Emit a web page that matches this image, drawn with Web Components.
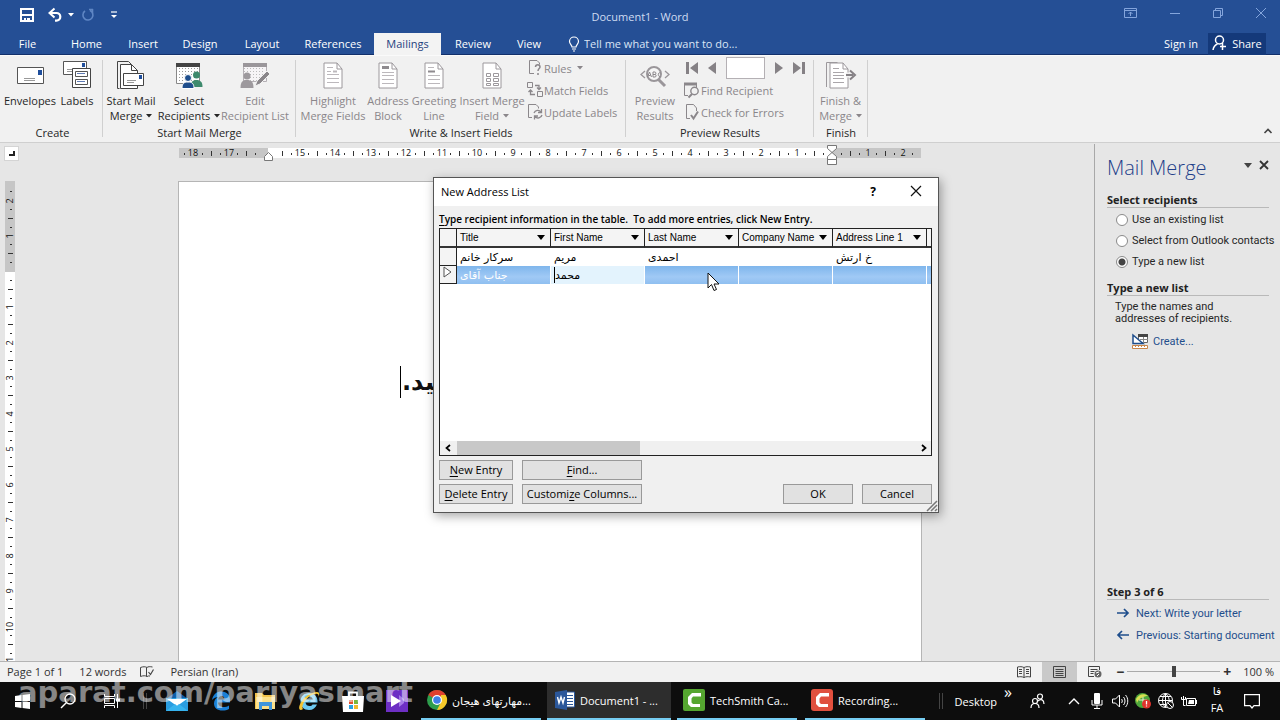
<!DOCTYPE html>
<html lang="en">
<head>
<meta charset="utf-8">
<title>Document1 - Word</title>
<style>
  html, body { margin: 0; height: 100%; }
  body { font: 11px/15px "Open Sans", "DejaVu Sans", sans-serif; color: #262626; background: #e6e6e6; overflow: hidden; }
</style>
</head>
<body>
<word-app></word-app>
<script>
const BASE = `*{box-sizing:border-box} button{font:inherit;color:inherit;background:none;border:0;padding:0;margin:0} a{color:inherit;text-decoration:none} input{font:inherit}`;

function define(name, css, html, setup) {
  const template = document.createElement('template');
  template.innerHTML = `<style>${BASE}${css}</style>${html}`;
  customElements.define(name, class extends HTMLElement {
    connectedCallback() {
      if (this.shadowRoot) return;
      this.attachShadow({ mode: 'open' }).append(template.content.cloneNode(true));
      if (setup) setup.call(this, this.shadowRoot);
    }
  });
}

/* ---------- icons: name -> [width, height, markup] ---------- */
const PAGE = (c) => `<path d="M1 1h13l5 6v19H1z" fill="#fff" stroke="${c}"/><path d="M14 1v6h5" fill="none" stroke="${c}"/>`;
const GRIDDOTS = (c) => { let s = ''; for (let y = 7; y < 20; y += 3) for (let x = 4; x < 24; x += 3) s += `<rect x="${x}" y="${y}" width="1" height="1" fill="${c}"/>`; return s; };
const ICONS = {
  save: [14, 14, `<path d="M1 1h12v12H1z" fill="none" stroke="#fff" stroke-width="2"/><path d="M2 7h10M5 10v3" stroke="#fff" stroke-width="2"/><path d="M7 10h3v3H7z" fill="#fff"/>`],
  undo: [14, 14, `<path d="M2 5h6.500a3.800 3.800 0 0 1 0 7.600H7" fill="none" stroke="#fff" stroke-width="2.200"/><path d="M6.500.500L1.500 5l5 4.500" fill="none" stroke="#fff" stroke-width="2"/>`],
  caret: [6, 4, `<path d="M0 0h6L3 3.500z" fill="currentColor"/>`],
  redo: [13, 14, `<path d="M4 3A5 5 0 1 0 9 2.500M11.500 1v4M8 1.500h4" fill="none" stroke="#5f86c4" stroke-width="1.600"/>`],
  qat: [8, 8, `<path d="M1 1h6" stroke="#fff" stroke-width="1.200"/><path d="M1 4h6L4 7z" fill="#fff"/>`],
  ribbonopt: [14, 12, `<g fill="none" stroke="#84a5dc"><path d="M.500 1.500h12v9H.500zM.500 3.500h12M6.500 9V5M4.500 7l2-2 2 2"/></g>`],
  min: [12, 12, `<path d="M1 6.500h10" stroke="#84a5dc"/>`],
  restore: [12, 12, `<path d="M1.500 3.500h7v7h-7zM3.500 3V1.500h7v7H9" fill="none" stroke="#84a5dc"/>`],
  close: [12, 12, `<path d="M1 1l10 10M11 1L1 11" stroke="#84a5dc"/>`],
  bulb: [12, 16, `<path d="M4 11c0-2-2.500-3-2.500-5.500a4.500 4.500 0 0 1 9 0C10.500 8 8 9 8 11z" fill="none" stroke="#fff" stroke-width="1.200"/><path d="M4 13h4M5 15h2" stroke="#fff"/>`],
  share: [16, 16, `<circle cx="7.500" cy="5" r="4" fill="none" stroke="#fff" stroke-width="1.500"/><path d="M1 15c.500-3 2-5 4.500-6M10.500 8v7M8 11.500h6" fill="none" stroke="#fff" stroke-width="1.500"/>`],
  envelope: [28, 28, `<path d="M1.500 6.500h26v16H1.500z" fill="#fff" stroke="#555"/><path d="M22 9h4v5h-4z" fill="#1f4e9c"/><path d="M8 17.500h11M8 19.500h11" stroke="#999"/>`],
  labels: [28, 28, `<path d="M.500.500h23v13H.500z" fill="#fff" stroke="#555"/><path d="M19 2h3v4h-3z" fill="#1f4e9c"/><path d="M4 8.500h7M4 10.500h5" stroke="#999"/><path d="M9.500 7.500h18v19h-18z" fill="#fff" stroke="#444"/><path d="M12.500 10.500h12v5h-12zM12.500 18.500h12v5h-12z" fill="#fff" stroke="#555"/><path d="M14 12.500h8M14 20.500h8" stroke="#5f7bb5"/>`],
  startmerge: [28, 28, `<path d="M2.500 27.500H.500V.500h11l3 3" fill="none" stroke="#444"/><path d="M3.500 3.500h11l6 6v18h-17z" fill="#fff" stroke="#444"/><path d="M14.500 3.500v6h6" fill="none" stroke="#444"/><path d="M6.500 12.500h20v12h-20z" fill="#fff" stroke="#444"/><path d="M22 14h3v4h-3z" fill="#1f4e9c"/><path d="M10 19.500h9M10 21.500h7" stroke="#999"/>`],
  recipients: [28, 28, `<path d="M1.500 2.500h23v20h-23z" fill="#fff" stroke="#888"/><path d="M1 2h24v4H1z" fill="#444"/>${GRIDDOTS('#999')}<circle cx="21.500" cy="14" r="3.500" fill="#3e8a6d"/><path d="M15.500 26c0-5 2-7 6-7s6 2 6 7z" fill="#3e8a6d"/><circle cx="13" cy="17" r="3.500" fill="#1f4e8c" stroke="#fff"/><path d="M7 27.500c0-5 2-6.500 6-6.500s6 1.500 6 6.500z" fill="#1f4e8c" stroke="#fff"/>`],
  editlist: [30, 28, `<path d="M3.500 2.500h23v18h-23z" fill="#f6f4f6" stroke="#b5b0b5"/><path d="M3 2h24v4H3z" fill="#9a969a"/>${GRIDDOTS('#bbb')}<circle cx="7" cy="15" r="3.500" fill="#9d999d"/><path d="M.500 27c0-6 2-8 6.500-8s6.500 2 6.500 8z" fill="#9d999d"/><path d="M15 25l2-5L27 10l3 3-10 10z" fill="#8a868a" stroke="#f1f1f1"/>`],
  highlight: [20, 27, `${PAGE('#9c989c')}<path d="M4 5.500h6M4 9.500h4M4 12.500h12M4 16.500h12M4 20.500h12" stroke="#bcb8bc"/><path d="M10 9.500h4" stroke="#bcb8bc" stroke-width="2"/>`],
  address: [20, 27, `${PAGE('#9c989c')}<path d="M4 5.500h7" stroke="#8f8b8f" stroke-width="3"/><path d="M4 10.500h12M4 13.500h12M4 17.500h12M4 21.500h12" stroke="#bcb8bc"/>`],
  greeting: [20, 27, `${PAGE('#9c989c')}<path d="M4 9.500h7" stroke="#8f8b8f" stroke-width="2"/><path d="M4 5.500h6M4 13.500h12M4 17.500h12M4 21.500h12" stroke="#bcb8bc"/>`],
  insertfield: [20, 27, `${PAGE('#9c989c')}<path d="M4.500 11.500h4v3h-4zM11.500 11.500h5v3h-5zM4.500 16.500h4v3h-4zM11.500 16.500h5v3h-5zM4.500 21.500h4v2h-4zM11.500 21.500h5v2h-5z" fill="none" stroke="#9c989c"/>`],
  rules: [16, 16, `<path d="M12.500 4.500V3l-2.500-2.500H2.500v13H7" fill="none" stroke="#8b878b"/><path d="M8.500 7c0-3 4.500-3 4.500 0 0 1.500-2 1.800-2 4M11 13v2" fill="none" stroke="#8b878b" stroke-width="1.500"/>`],
  match: [16, 16, `<g fill="none" stroke="#8b878b"><path d="M.500.500h5v5h-5zM10.500 9.500h5v5h-5z"/><path d="M8 3.500h4v4M10 5.500l2 2 2-2M8 12.500H3.500V8M1.500 10l2-2 2 2" stroke-width="1.300"/></g>`],
  update: [16, 16, `<path d="M11.500 4.500V3L9 .500H1.500v13H5" fill="none" stroke="#8b878b"/><path d="M7 9a4 4 0 0 1 7-1M14.500 5v3.500H11M15 11a4 4 0 0 1-7 1.500M7.500 15.500V12H11" fill="none" stroke="#8b878b" stroke-width="1.300"/>`],
  preview: [30, 28, `<circle cx="14" cy="13" r="7" fill="#f6f6f6" stroke="#9a969a" stroke-width="2"/><path d="M18 18l7 7" stroke="#9a969a" stroke-width="3"/><path d="M5 10l-4 3.500L5 17M25 10l4 3.500-4 3.500" fill="none" stroke="#9a969a" stroke-width="1.300"/><g fill="none" stroke="#8b878b"><path d="M7.500 16l2-5 2 5M8.500 14.500h2M13 11v5h2c1.500 0 1.500-2.500 0-2.500h-2 2c1.200 0 1.200-2.500 0-2.500zM20.500 12c-3-1.500-3 4.500 0 3.500"/></g>`],
  first: [12, 12, `<path d="M0 0h3v12H0zM12 0v12L4 6z" fill="#858185"/>`],
  prev: [8, 12, `<path d="M8 0v12L0 6z" fill="#858185"/>`],
  next: [8, 12, `<path d="M0 0v12l8-6z" fill="#858185"/>`],
  last: [12, 12, `<path d="M9 0h3v12H9zM0 0v12l8-6z" fill="#858185"/>`],
  findrec: [16, 16, `<path d="M.500 3v10.500H4M12.500 3v3" fill="none" stroke="#8b878b"/><path d="M0 2h13" stroke="#8b878b" stroke-width="3"/><circle cx="10.500" cy="9" r="3.700" fill="none" stroke="#8b878b" stroke-width="1.400"/><path d="M8 12l-3.500 3.500" stroke="#8b878b" stroke-width="2"/>`],
  check: [16, 16, `<path d="M12.500 7V4L9.500.500h-7v14H6" fill="none" stroke="#8b878b"/><path d="M7 11l2.500 3.500 4.500-7" fill="none" stroke="#8b878b" stroke-width="2"/>`],
  finish: [30, 28, `<path d="M.500 26V1.500h11" fill="none" stroke="#9c989c"/><g transform="translate(3 1)">${PAGE('#9c989c')}<path d="M4 6.500h6M4 10.500h11M4 13.500h11M4 16.500h11M4 20.500h11" stroke="#aaa6aa"/></g><path d="M20 14h9" stroke="#f1f1f1" stroke-width="5"/><path d="M20 14h7M24 9.500l5 4.500-5 4.500" fill="none" stroke="#858185" stroke-width="2"/>`],
  collapse: [10, 6, `<path d="M1.500 5L5 1.500 8.500 5" fill="none" stroke="#444" stroke-width="1.600"/>`],
  paneclose: [10, 10, `<path d="M1 1l8 8M9 1L1 9" stroke="#333" stroke-width="1.800"/>`],
  panecaret: [8, 5, `<path d="M0 0h8L4 5z" fill="#444"/>`],
  create: [16, 15, `<path d="M6.500.500h9v8h-9z" fill="#fff" stroke="#666"/><path d="M6 1.500h10" stroke="#444" stroke-width="3"/><path d="M8 5.500h8M11.500 3v6" stroke="#888"/><path d="M1 1l10 8.500H1z" fill="#fff" stroke="#1f4e8c" stroke-width="1.500"/><path d="M.500 11.500h15v3H.500z" fill="#fff" stroke="#c98548"/><path d="M3.500 12v1M6.500 12v1M9.500 12v1M12.500 12v1" stroke="#c98548"/>`],
  arrowr: [12, 10, `<path d="M0 5h11M7 1l4 4-4 4" fill="none" stroke="#1f4e8c" stroke-width="1.700"/>`],
  arrowl: [12, 10, `<path d="M12 5H1M5 1L1 5l4 4" fill="none" stroke="#1f4e8c" stroke-width="1.700"/>`],
  dlgclose: [12, 12, `<path d="M1 1l10 10M11 1L1 11" stroke="#111" stroke-width="1.200"/>`],
  drop: [8, 5, `<path d="M0 0h8L4 5z" fill="#000"/>`],
  rowmark: [9, 12, `<path d="M1 1v10l7-5z" fill="#fff" stroke="#555"/>`],
  sleft: [6, 8, `<path d="M5 1L1.500 4 5 7" fill="none" stroke="#000" stroke-width="1.700"/>`],
  sright: [6, 8, `<path d="M1 1l3.500 3L1 7" fill="none" stroke="#000" stroke-width="1.700"/>`],
  grip: [10, 10, `<path d="M10 0L0 10M10 4l-6 6M10 8l-2 2" stroke="#777" stroke-width="1.500"/>`],
  cursor: [13, 20, `<path d="M1 1v15l3.500-3.500L7 18.500l2.500-1L7 12h5z" fill="#fff" stroke="#111"/>`],
  proof: [14, 12, `<g fill="none" stroke="#444"><path d="M7 10.500c-1.500-1-4-1-6.500 0v-9c2.500-1 5-1 6.500 0 1-1 3-1 5.500-.500M6.500 1.500v9M7 10.500c1-.500 2-.800 3-.500"/><path d="M8.500 6l2 2.500 3-5" stroke-width="1.200"/></g>`],
  readmode: [14, 12, `<path d="M7 11.500c-2-1-4-1-6.500-.500v-10c2.500-.500 4.500-.500 6.500.500 2-1 4-1 6.500-.500v10c-2.500-.500-4.500-.500-6.500.500zM7 1.500v10M2 3.500h3M2 5.500h3M2 7.500h3M9 3.500h3M9 5.500h3M9 7.500h3" fill="none" stroke="#444"/>`],
  printlayout: [14, 12, `<path d="M.500.500h12v11H.500zM2.500 3.500h8M2.500 5.500h8M2.500 7.500h8M2.500 9.500h8" fill="none" stroke="#444"/>`],
  weblayout: [14, 12, `<path d="M6 10.500H.500V.500h11V4M2.500 3.500h7M2.500 5.500h4M2.500 7.500h3" fill="none" stroke="#444"/><circle cx="10" cy="8" r="3.500" fill="#666"/><path d="M8 7l3-1M9 10l2-2" stroke="#fff"/>`],
  windows: [15, 15, `<path d="M0 2l6.500-1v6H0zM7.500.900L15 0v7H7.500zM0 8h6.500v6L0 13zM7.500 8H15v7l-7.500-1z" fill="#fff"/>`],
  search: [16, 16, `<circle cx="10" cy="6" r="5" fill="none" stroke="#fff" stroke-width="1.300"/><path d="M6.500 9.500L1 15" stroke="#fff" stroke-width="1.500"/>`],
  taskview: [17, 16, `<path d="M.500 1v2.500h10V1M.500 15v-2.500h10V15M.500 5.500h10v5H.500zM13.500 1v14" fill="none" stroke="#fff"/><path d="M12 5.500h4v3h-4z" fill="#fff"/>`],
  mail: [24, 21, `<path d="M1 8L12 0l11 8z" fill="#0f5ea8"/><path d="M1 7h22v13H1z" fill="#2a9de0"/><path d="M2 8h20l-10 7z" fill="#fff"/><path d="M1 20l9-7 2 2 2-2 9 7z" fill="#36b3ee"/>`],
  edge: [20, 20, `<path d="M1 9C2 3 6 .500 10.500.500c5.500 0 8.500 4 8.500 8.500v2.500H7c.300 3.500 3 4.500 5.500 4.500 2 0 4-.500 5.500-1.500v3.500c-2 1-4 1.500-6.500 1.500C6.500 19.500 3 17 3 12.500 3 9 5 7 7.500 6 5 6 2.500 7 1 9zM7.200 8.500h6.300C13.500 6.500 12.500 5 10.500 5S7.500 6.500 7.200 8.500z" fill="#1b7fd6"/>`],
  folder: [21, 18, `<path d="M0 1h7l2 2h11v14H0z" fill="#f0c24b"/><path d="M1 5h19v12H1z" fill="#fbe08a"/><path d="M4 18v-8h13v8h-3v-4H7v4z" fill="#3f95dc"/>`],
  ie: [22, 20, `<path d="M11 2c5.500 0 9 4 8.500 9.500H7.500c.300 2.500 2 3.500 4 3.500 1.500 0 2.500-.500 3-1.500H19C17.500 17 15 19 11 19c-5 0-8.500-3.500-8.500-8.500S6 2 11 2zM7.500 8.500h7.300C14.500 6.500 13 5.500 11 5.500S8 6.500 7.500 8.500z" fill="#6cc9f2"/><path d="M2.500 19C-2 17 6 2 19 1c3 0 2.500 3 1.500 4.500C21.500 2 17 2 12 5 6 9 3 16 5 18c-1 .800-1.800 1-2.500 1z" fill="#f3c433"/>`],
  store: [22, 22, `<path d="M7 7V2.500h8V7" fill="none" stroke="#fff" stroke-width="1.800"/><path d="M0 6h22l-1 16H1z" fill="#fff"/><path d="M7 10h4v4H7z" fill="#e2502f"/><path d="M12 10h4v4h-4z" fill="#7cb63a"/><path d="M7 15h4v4H7z" fill="#2b9fdf"/><path d="M12 15h4v4h-4z" fill="#f2b92c"/>`],
  video: [22, 22, `<path d="M0 0h22v22H0z" fill="#6d2fc4"/><path d="M13 5v12l5-4V9z" fill="#a57be6"/><path d="M5 5v12l10-6z" fill="#fff"/>`],
  chrome: [20, 20, `<circle cx="10" cy="10" r="10" fill="#2d9d4c"/><path d="M10 10L1.300 5A10 10 0 0 1 18.700 5z" fill="#e0402f"/><path d="M18.700 5A10 10 0 0 1 10 20l4-8V5z" fill="#f6c829"/><circle cx="10" cy="10" r="5" fill="#fff"/><circle cx="10" cy="10" r="3.800" fill="#3f7fe8"/>`],
  word: [20, 20, `<path d="M10 2h9.500v15H10z" fill="#fff" stroke="#2b579a"/><path d="M12 5.500h6M12 8.500h6M12 11.500h6M12 14.500h6" stroke="#2b579a" stroke-width="1.200"/><path d="M0 2l12-2v20L0 18z" fill="#2b579a"/><path d="M2.500 7l1.500 6 2-6 2 6 1.500-6" fill="none" stroke="#fff" stroke-width="1.400"/>`],
  camgreen: [22, 22, `<rect width="22" height="22" rx="2" fill="#55a630"/><path d="M18 4H9L5 8v7l3 3h9v-3h-7l-1.500-1.500v-4L10 7.500h8z" fill="#fff"/>`],
  camred: [22, 22, `<rect width="22" height="22" rx="3" fill="#e0503f"/><path d="M18 4H9L5 8v7l3 3h9v-3h-7l-1.500-1.500v-4L10 7.500h8z" fill="#fff"/>`],
  people: [15, 16, `<g fill="none" stroke="#fff" stroke-width="1.200"><circle cx="5" cy="8" r="2.500"/><path d="M1 15c0-6 8-6 8 0"/><circle cx="10" cy="3.500" r="2.500"/><path d="M8 8c3-3 6-1 6 3"/></g>`],
  up: [12, 8, `<path d="M1 7l5-5 5 5" fill="none" stroke="#fff" stroke-width="1.400"/>`],
  mic: [12, 16, `<rect x="3" y="0" width="6" height="11" rx="1" fill="#fff"/><path d="M1 7v5h10V7M6 12v3M3 15.500h6" fill="none" stroke="#fff"/>`],
  speaker: [16, 14, `<path d="M.500 5h3l4-4v12l-4-4h-3z" fill="none" stroke="#fff"/><path d="M9.500 5c1 1 1 3 0 4M11.500 3c2 2 2 6 0 8M13.500 1c3 3 3 9 0 12" fill="none" stroke="#fff"/>`],
  idm: [16, 16, `<circle cx="7.500" cy="7.500" r="7.500" fill="#4ea63c"/><path d="M1 6C4 1 9 0 13 3 9 3 4 5 2 10z" fill="#d8df52"/><path d="M4 7h8M8 4v7" stroke="#e6f2d0"/><circle cx="11.500" cy="11" r="4.500" fill="#e0322c"/><path d="M11.500 8v3.500M11.500 12.500v1" stroke="#fff" stroke-width="1.300"/>`],
  globe: [16, 16, `<g fill="none" stroke="#fff"><circle cx="7.500" cy="7.500" r="7"/><path d="M.500 7.500h14M7.500.500v14M2 3.500h11M2 11.500h6M7.500.500c-4 4-4 10 0 14M7.500.500c3 3 4 5 3.500 8"/></g><circle cx="12" cy="12" r="3.500" fill="#0e0e0e" stroke="#fff"/><path d="M10 10l4 4" stroke="#fff"/>`],
  battery: [16, 12, `<path d="M5.500 3.500h9v7h-9zM15.500 5v4M2.500 1v3M.500 2v2.500h4V2M2.500 5v5.500h2" fill="none" stroke="#fff"/><path d="M8 5h5v4H7z" fill="#fff"/>`],
  notify: [16, 15, `<path d="M.600.600h14.800v11H10L8 14l-2-2.400H.600z" fill="none" stroke="#fff" stroke-width="1.200"/>`]
};
define('ui-icon', `:host{display:inline-flex;flex:none} svg{display:block;overflow:visible}`, ``, function (root) {
  const [w, h, body] = ICONS[this.getAttribute('name')];
  root.innerHTML += `<svg width="${w}" height="${h}" viewBox="0 0 ${w} ${h}" aria-hidden="true">${body}</svg>`;
});

/* ---------- title bar and tabs ---------- */
define('ribbon-tab', `
  :host{display:block;width:var(--w);height:22px}
  button{display:flex;align-items:center;justify-content:center;width:100%;height:100%;padding-bottom:2px;color:#fff;white-space:nowrap}
  :host([active]) button{background:#f3f3f3;color:#1f3f7f}`,
  `<button role="tab"><slot></slot></button>`);

define('title-bar', `
  :host{display:block;background:#254f95;color:#fff;box-shadow:inset 0 -1px #12306b}
  .top{display:grid;grid-template-columns:1fr auto 1fr;height:33px;align-items:center}
  .qat{display:flex;align-items:center;padding:0 0 4px 20px}
  .qat button{display:flex;align-items:center;gap:6px}
  .qat .u{margin-left:14px}.qat .r{margin-left:7px}.qat .q{margin-left:16px}
  .title{color:#cfdcf2}
  .win{display:flex;justify-content:flex-end;gap:31px;padding:0 13px 5px 0}
  nav{display:flex;align-items:center;height:22px}
  .tell{display:flex;align-items:center;gap:4px;margin-left:15px}
  .tell input{width:180px;background:none;border:0;padding:0 0 2px;outline:0;color:#fff}
  .tell input::placeholder{color:#dbe5f6;opacity:1}
  .acct{display:flex;align-items:center;gap:10px;margin-left:auto;margin-right:14px}
  .acct a{padding-bottom:2px}
  .share{display:flex;align-items:center;gap:4px;height:22px;width:58px;justify-content:center;background:#14397a;padding-bottom:2px}`,
  `<div class="top">
    <div class="qat"><button aria-label="Save"><ui-icon name="save"></ui-icon></button><button class="u" aria-label="Undo"><ui-icon name="undo"></ui-icon><ui-icon name="caret"></ui-icon></button><button class="r" aria-label="Redo"><ui-icon name="redo"></ui-icon></button><button class="q" aria-label="Customize"><ui-icon name="qat"></ui-icon></button></div>
    <div class="title">Document1 - Word</div>
    <div class="win"><button aria-label="Ribbon options"><ui-icon name="ribbonopt"></ui-icon></button><button aria-label="Minimize"><ui-icon name="min"></ui-icon></button><button aria-label="Restore"><ui-icon name="restore"></ui-icon></button><button aria-label="Close"><ui-icon name="close"></ui-icon></button></div>
  </div>
  <nav role="tablist">
    <ribbon-tab style="--w:55px">File</ribbon-tab><ribbon-tab style="--w:63px">Home</ribbon-tab><ribbon-tab style="--w:50px">Insert</ribbon-tab><ribbon-tab style="--w:64px">Design</ribbon-tab><ribbon-tab style="--w:60px">Layout</ribbon-tab><ribbon-tab style="--w:82px">References</ribbon-tab><ribbon-tab active style="--w:67px">Mailings</ribbon-tab><ribbon-tab style="--w:64px">Review</ribbon-tab><ribbon-tab style="--w:48px">View</ribbon-tab>
    <label class="tell"><ui-icon name="bulb"></ui-icon><input aria-label="Tell me" placeholder="Tell me what you want to do..."></label>
    <div class="acct"><a href="#signin">Sign in</a><button class="share"><ui-icon name="share"></ui-icon>Share</button></div>
  </nav>`);

/* ---------- ribbon ---------- */
define('ribbon-group', `
  :host{display:flex;flex-direction:column;background:linear-gradient(#d0d0d0,#d0d0d0) right 3px/1px 77px no-repeat;margin:1px 0;height:84px}
  .items{display:flex;flex:1}
  .name{height:16px;text-align:center;line-height:16px}`,
  `<div class="items"><slot></slot></div><div class="name"></div>`, function (root) {
    root.querySelector('.name').textContent = this.getAttribute('name');
  });

define('ribbon-button', `
  :host{display:block;width:var(--w);flex:none}
  button{display:flex;flex-direction:column;align-items:center;width:100%;white-space:nowrap;text-align:center}
  :host([disabled]) button{color:#8a868a}
  .pic{display:flex;align-items:center;height:36px}
  span{display:block}
  .second{display:flex;align-items:center;gap:4px}`,
  `<button><span class="pic"></span><span><slot></slot></span><span class="second"></span></button>`,
  function (root) {
    const icon = document.createElement('ui-icon');
    icon.setAttribute('name', this.getAttribute('icon'));
    root.querySelector('.pic').append(icon);
    const second = root.querySelector('.second');
    second.textContent = this.getAttribute('second') || '';
    if (this.hasAttribute('menu')) {
      const caret = document.createElement('ui-icon');
      caret.setAttribute('name', 'caret');
      second.append(caret);
    }
    root.querySelector('button').disabled = this.hasAttribute('disabled');
  });

define('mailings-ribbon', `
  :host{display:flex;background:#f1f1f1;border-bottom:1px solid #cfcfcf;height:88px;border-top:1px solid #fafafa}
  .small{display:flex;flex-direction:column}
  .fields{padding-left:5px}
  .small button{display:flex;align-items:center;gap:1px;height:22px;color:#8a868a;white-space:nowrap}
  .small .caret{margin-left:4px}
  .rec{display:flex;align-items:center;height:22px;gap:10px;padding-left:2px}
  .rec button{height:12px}
  .rec input{width:39px;height:22px;border:1px solid #b4b0b4;background:#fff;padding:0;margin:0}
  .up{margin:auto 7px 5px auto}`,
  `<ribbon-group name="Create" style="width:103px;padding-left:2px"><ribbon-button style="--w:56px" icon="envelope">Envelopes</ribbon-button><ribbon-button style="--w:38px" icon="labels">Labels</ribbon-button></ribbon-group>
  <ribbon-group name="Start Mail Merge" style="width:193px"><ribbon-button style="--w:56px" icon="startmerge" second="Merge" menu>Start Mail</ribbon-button><ribbon-button style="--w:60px" icon="recipients" second="Recipients" menu>Select</ribbon-button><ribbon-button style="--w:72px" icon="editlist" second="Recipient List" disabled>Edit</ribbon-button></ribbon-group>
  <ribbon-group name="Write &amp; Insert Fields" style="width:330px"><ribbon-button style="--w:74px" icon="highlight" second="Merge Fields" disabled>Highlight</ribbon-button><ribbon-button style="--w:36px" icon="address" second="Block" disabled>Address</ribbon-button><ribbon-button style="--w:56px" icon="greeting" second="Line" disabled>Greeting</ribbon-button><ribbon-button style="--w:60px" icon="insertfield" second="Field" menu disabled>Insert Merge</ribbon-button>
    <div class="small fields"><button disabled><ui-icon name="rules"></ui-icon>Rules<ui-icon class="caret" name="caret"></ui-icon></button><button disabled><ui-icon name="match"></ui-icon>Match Fields</button><button disabled><ui-icon name="update"></ui-icon>Update Labels</button></div></ribbon-group>
  <ribbon-group name="Preview Results" style="width:188px"><ribbon-button style="--w:58px" icon="preview" second="Results" disabled>Preview</ribbon-button>
    <div class="small"><div class="rec"><button disabled aria-label="First"><ui-icon name="first"></ui-icon></button><button disabled aria-label="Previous"><ui-icon name="prev"></ui-icon></button><input aria-label="Record" disabled><button disabled aria-label="Next"><ui-icon name="next"></ui-icon></button><button disabled aria-label="Last"><ui-icon name="last"></ui-icon></button></div><button disabled><ui-icon name="findrec"></ui-icon>Find Recipient</button><button disabled><ui-icon name="check"></ui-icon>Check for Errors</button></div></ribbon-group>
  <ribbon-group name="Finish" style="width:54px"><ribbon-button style="--w:53px" icon="finish" second="Merge" menu disabled>Finish &amp;</ribbon-button></ribbon-group>
  <button class="up" aria-label="Collapse the ribbon"><ui-icon name="collapse"></ui-icon></button>`);

/* ---------- rulers ---------- */
const STEP = 71 / 2;
function marks(from, to, zero, skip) {
  let out = '';
  for (let q = Math.ceil((from - zero) * 4 / STEP); q * STEP / 4 + zero < to - 1; q++) {
    const at = Math.round(q * STEP / 4 + zero);
    if (q === 0 || skip(at)) continue;
    if (q % 4 === 0) out += `<text x="${at}" y="8" text-anchor="middle">${Math.abs(q / 4)}</text>`;
    else if (q % 2 === 0) out += `<rect x="${at}" y="3" width="1" height="5"/>`;
    else out += `<rect x="${at}" y="5" width="1" height="2"/>`;
  }
  return out;
}
const RULERTEXT = `text{font:9px "Open Sans",sans-serif;fill:#111} rect{fill:#333}`;
define('horizontal-ruler', `:host{display:block;height:20px} svg{display:block;overflow:visible} ${RULERTEXT}`, ``, function (root) {
  root.innerHTML += `<svg width="742" height="20"><path d="M0 0h742v10H0z" fill="#c6c6c6"/><path d="M89 0h564v10H89z" fill="#fff"/>${marks(3, 742, 653, (x) => Math.abs(x - 89) < 8)}
    <g fill="#fff" stroke="#777"><path d="M85.500 12.500v-4l4-4 4 4v4z"/><path d="M648.500-2.500h9v3l-4.500 4 4.500 4v3h-9v-3l4.500-4-4.500-4zM648.500 11.500h9v5h-9z"/></g></svg>`;
});
define('vertical-ruler', `:host{display:block;background:#fff;width:10px} svg{display:block;overflow:visible} ${RULERTEXT}`, ``, function (root) {
  root.innerHTML += `<svg width="10" height="480"><path d="M0 0h10v91H0z" fill="#c6c6c6"/><g transform="translate(0 480) rotate(-90)">${marks(-3, 470, 389, () => false)}</g></svg>`;
});

/* ---------- document area ---------- */
define('document-view', `
  :host{display:grid;grid-template-columns:18px 1fr;grid-template-rows:38px 1fr;min-width:0;min-height:0;overflow:hidden}
  .sel{width:15px;height:15px;margin:3px 0 0 4px;background:#fff;border:1px solid #d4d4d4;display:flex;align-items:center;justify-content:center}
  .sel i{width:6px;height:5px;border:solid #222;border-width:0 2px 2px 0}
  .hr{padding:5px 12px 0 0}
  horizontal-ruler{width:742px;margin:0 auto}
  vertical-ruler{margin-left:5px}
  .sheet{padding-right:12px;display:flex;justify-content:center;min-height:0}
  article{width:744px;background:#fff;border:1px solid #b5b5b5;border-bottom:0;overflow:hidden}
  p{display:flex;direction:rtl;justify-content:flex-end;margin:184px 0 0 221px;font:bold 24px/32px "DejaVu Sans",sans-serif;color:#111}
  p::after{content:"";width:1px;height:32px;background:#000;margin-right:1px}`,
  `<div class="sel"><i></i></div><div class="hr"><horizontal-ruler></horizontal-ruler></div>
  <vertical-ruler></vertical-ruler><div class="sheet"><article><p lang="fa">یید.</p></article></div>`);

/* ---------- mail merge task pane ---------- */
define('pane-heading', `:host{display:block;font-weight:700;line-height:14px;border-bottom:1px solid #b9b9b9;font-size:11px;font-family:"Open Sans",sans-serif}`, `<slot></slot>`);
define('mail-merge-pane', `
  :host{display:flex;flex-direction:column;width:186px;flex:none;border-left:1px solid #a8a8a8;padding:10px 11px 15px 12px;margin-top:1px;background:#e6e6e6;font-family:Roboto,sans-serif}
  header{display:flex;align-items:center;height:28px}
  h2{font:300 20px/28px "Open Sans",sans-serif;margin:0 auto 0 0;color:#1f3f8a;white-space:nowrap}
  header button{margin:0 0 6px 7px;display:flex}
  pane-heading{color:#222}
  .first{margin-top:11px}
  label{display:flex;align-items:center;gap:4px;height:21px;margin-left:9px;white-space:nowrap}
  input{appearance:none;flex:none;width:12px;height:12px;margin:0;border:1px solid #8a8a8a;border-radius:50%;background:#fff}
  input:checked{background:radial-gradient(circle,#444 3px,#fff 4px)}
  .opts{margin:1px 0 9px}
  p{margin:5px 0 5px 8px;line-height:12px}
  .link{display:flex;align-items:center;height:22px;color:#1f4e8c;white-space:nowrap;margin-left:10px;gap:7px}
  .create{margin-left:25px;gap:5px}
  footer{margin-top:auto}`,
  `<header><h2>Mail Merge</h2><button aria-label="Pane options"><ui-icon name="panecaret"></ui-icon></button><button aria-label="Close pane"><ui-icon name="paneclose"></ui-icon></button></header>
  <pane-heading class="first">Select recipients</pane-heading>
  <div class="opts"><label><input type="radio" name="src">Use an existing list</label><label><input type="radio" name="src">Select from Outlook contacts</label><label><input type="radio" name="src" checked>Type a new list</label></div>
  <pane-heading>Type a new list</pane-heading>
  <p>Type the names and<br>addresses of recipients.</p>
  <a class="link create" href="#create"><ui-icon name="create"></ui-icon>Create...</a>
  <footer><pane-heading>Step 3 of 6</pane-heading><a class="link" href="#next" style="margin-top:2px"><ui-icon name="arrowr"></ui-icon>Next: Write your letter</a><a class="link" href="#prev"><ui-icon name="arrowl"></ui-icon>Previous: Starting document</a></footer>`);

/* ---------- New Address List dialog ---------- */
define('address-dialog', `
  :host{display:block;width:506px;height:336px;background:#f0f0f0;border:1px solid #555;box-shadow:2px 3px 10px rgba(0,0,0,.35);color:#000}
  header{display:flex;align-items:center;height:28px;background:#fff;padding:0 16px 2px 7px}
  h1{font-size:11px;font-weight:400;margin:0 auto 0 0}
  header button{display:flex}
  .help{font-weight:700;font-size:12px;margin-right:34px}
  .body{padding:5px 6px 0 5px}
  .hint{font-weight:600;font-size:10px;line-height:16px;white-space:pre;height:17px}
  .frame{border:1px solid #222;background:#fff;height:228px;display:flex;flex-direction:column;overflow:hidden}
  .grid{flex:1;overflow:hidden}
  table{border-collapse:separate;border-spacing:0;table-layout:fixed;width:581px}
  col{width:94px}.c0{width:17px}
  th{font:10px/17px "Liberation Sans",sans-serif;height:19px;padding:0 5px 0 3px;border-right:1px solid #222;border-bottom:2px solid #333;text-align:left;background:#f4f4f4;white-space:nowrap}
  th div{display:flex;align-items:center;justify-content:space-between}
  td{height:18px;padding:0 3px;font:11px/17px "DejaVu Sans",sans-serif;white-space:nowrap;border-right:1px solid #fff}
  td.h{background:#f4f4f4;border-right:1px solid #222;border-bottom:1px solid #222;padding:0 3px}
  .on td:not(.h){background:linear-gradient(#7fb6ec,#a0c9f5 60%,#8fbff0);color:#fff}
  .on td.edit{background:#e3f3fd}
  td input{display:block;width:80px;height:16px;border:0;border-left:1px solid #000;padding:0;background:none;color:#000;direction:rtl;text-align:left}
  .scroll{display:flex;align-items:center;height:14px;background:#f0f0f0;padding:0 4px 0 5px}
  .thumb{width:183px;height:14px;background:#c8c8c8;margin:0 auto 0 6px}
  .btns{display:grid;grid-template-columns:74px 120px 1fr 70px 70px;gap:4px 9px;padding-top:4px}
  .btns button{height:20px;border:1px solid #999;background:#e1e1e1;white-space:nowrap;line-height:16px}
  .ok{grid-column:4}
  .grip{position:absolute;right:1px;bottom:1px}
  .cur{position:absolute;left:273px;top:94px}
  u{text-underline-offset:2px}`,
  `<header><h1>New Address List</h1><button class="help" aria-label="Help">?</button><button aria-label="Close"><ui-icon name="dlgclose"></ui-icon></button></header>
  <div class="body"><div class="hint"><u>T</u>ype recipient information in the table.  To add more entries, click New Entry.</div>
  <div class="frame"><div class="grid"><table><colgroup><col class="c0"><col><col><col><col><col><col></colgroup>
    <thead><tr><th></th><th><div>Title<ui-icon name="drop"></ui-icon></div></th><th><div>First Name<ui-icon name="drop"></ui-icon></div></th><th><div>Last Name<ui-icon name="drop"></ui-icon></div></th><th><div>Company Name<ui-icon name="drop"></ui-icon></div></th><th><div>Address Line 1<ui-icon name="drop"></ui-icon></div></th><th></th></tr></thead>
    <tbody><tr><td class="h"></td><td>سرکار خانم</td><td>مریم</td><td>احمدی</td><td></td><td>خ ارتش</td><td></td></tr>
    <tr class="on"><td class="h"><ui-icon name="rowmark"></ui-icon></td><td>جناب آقای</td><td class="edit"><input aria-label="First Name" value="محمد"></td><td></td><td></td><td></td><td></td></tr></tbody></table></div>
    <div class="scroll"><ui-icon name="sleft"></ui-icon><div class="thumb"></div><ui-icon name="sright"></ui-icon></div></div>
  <div class="btns"><button><u>N</u>ew Entry</button><button><u>F</u>ind...</button><span></span><span></span><span></span><button><u>D</u>elete Entry</button><button>Customi<u>z</u>e Columns...</button><button class="ok">OK</button><button>Cancel</button></div></div>
  <ui-icon class="grip" name="grip"></ui-icon><ui-icon class="cur" name="cursor"></ui-icon>`);

/* ---------- status bar ---------- */
define('status-bar', `
  :host{display:flex;align-items:center;height:21px;background:#f1f1f1;border-top:1px solid #b4b4b4;padding:0 6px 1px 7px;color:#333}
  .m{margin-left:16px}.p{margin-left:14px;display:flex}.l{margin-left:16px}
  .v{margin-left:auto;display:flex;align-items:center;height:20px}
  .v button{width:36px;height:20px;display:flex;align-items:center;justify-content:center}
  .v .on{background:#c9c9c9;width:35px}
  .v .z{width:14px;font-weight:700;font-size:14px}
  input{appearance:none;width:93px;height:12px;margin:0;background:linear-gradient(#aaa,#aaa) center/100% 1px no-repeat}
  input::-webkit-slider-thumb{appearance:none;width:4px;height:11px;background:#444}
  .pct{margin-left:9px}`,
  `<span>Page 1 of 1</span><span class="m">12 words</span><span class="p"><ui-icon name="proof"></ui-icon></span><span class="l">Persian (Iran)</span>
  <div class="v"><button aria-label="Read mode"><ui-icon name="readmode"></ui-icon></button><button class="on" aria-label="Print layout"><ui-icon name="printlayout"></ui-icon></button><button aria-label="Web layout"><ui-icon name="weblayout"></ui-icon></button><button class="z" aria-label="Zoom out">−</button><input type="range" aria-label="Zoom"><button class="z" aria-label="Zoom in">+</button><span class="pct">100 %</span></div>`);

/* ---------- Windows task bar ---------- */
define('task-item', `
  :host{display:block;width:124px;height:38px;padding:0 2px;flex:none}
  button{display:flex;align-items:center;gap:5px;width:100%;height:38px;padding-left:6px;color:#fff;white-space:nowrap;border-bottom:2px solid #76cdf2}
  :host([active]){padding:0} :host([active]) button{background:#2d2d2d;padding-left:8px}`,
  `<button><slot name="icon"></slot><slot></slot></button>`);
define('task-bar', `
  :host{display:flex;align-items:center;height:38px;background:#0d0d0d;color:#fff}
  .s{display:flex;align-items:center;justify-content:center;width:44px;height:38px;flex:none}
  .w{width:45px}
  .sep{width:4px;height:16px;border:solid #444;border-width:0 1px;margin:0 8px}
  .tasks{display:flex;gap:4px}
  .tray{display:flex;align-items:center;margin-left:auto;height:38px}
  .t{width:23px;display:flex;align-items:center;justify-content:center;height:38px;flex:none}
  .dsk{margin:0 7px 0 4px}
  .more{font-size:16px;line-height:20px;align-self:flex-start}
  .people{width:50px}
  .lang{width:34px;text-align:center;line-height:17px;padding-bottom:2px}
  .lang div{font-family:"DejaVu Sans",sans-serif;line-height:15px}`,
  `<button class="s w" aria-label="Start"><ui-icon name="windows"></ui-icon></button><button class="s w" aria-label="Search"><ui-icon name="search"></ui-icon></button><button class="s w" aria-label="Task view"><ui-icon name="taskview"></ui-icon></button><span class="sep"></span>
  <button class="s" aria-label="Mail"><ui-icon name="mail"></ui-icon></button><button class="s" aria-label="Edge"><ui-icon name="edge"></ui-icon></button><button class="s" aria-label="Files"><ui-icon name="folder"></ui-icon></button><button class="s" aria-label="Internet Explorer"><ui-icon name="ie"></ui-icon></button><button class="s" aria-label="Store"><ui-icon name="store"></ui-icon></button><button class="s" aria-label="Video"><ui-icon name="video"></ui-icon></button>
  <div class="tasks"><task-item><ui-icon slot="icon" name="chrome"></ui-icon><bdi dir="ltr">مهارتهای هیجان...</bdi></task-item><task-item active><ui-icon slot="icon" name="word"></ui-icon>Document1 - ...</task-item><task-item><ui-icon slot="icon" name="camgreen"></ui-icon>TechSmith Ca...</task-item><task-item><ui-icon slot="icon" name="camred"></ui-icon>Recording...</task-item></div>
  <div class="tray"><span class="sep"></span><span class="dsk">Desktop</span><span class="more">»</span><button class="t people" aria-label="People"><ui-icon name="people"></ui-icon></button><button class="t" aria-label="Hidden icons"><ui-icon name="up"></ui-icon></button><button class="t" aria-label="Microphone"><ui-icon name="mic"></ui-icon></button><button class="t" aria-label="Volume"><ui-icon name="speaker"></ui-icon></button><button class="t" aria-label="Download manager"><ui-icon name="idm"></ui-icon></button><button class="t" aria-label="Network"><ui-icon name="globe"></ui-icon></button><button class="t" aria-label="Battery"><ui-icon name="battery"></ui-icon></button><div class="lang"><div>فا</div>FA</div><button class="t" style="width:36px;margin-right:10px" aria-label="Notifications"><ui-icon name="notify"></ui-icon></button></div>`);

define('word-app', `
  :host{display:flex;flex-direction:column;height:100vh;position:relative;overflow:hidden}
  main{flex:1;display:flex;min-height:0;position:relative;background:#e6e6e6}
  document-view{flex:1}
  address-dialog{position:absolute;left:433px;top:34px}
  .mark{position:absolute;left:18px;bottom:11px;font:bold 29px/34px "DejaVu Sans",sans-serif;color:rgba(255,255,255,.5);pointer-events:none;white-space:nowrap}`,
  `<title-bar></title-bar><mailings-ribbon></mailings-ribbon>
  <main><document-view></document-view><mail-merge-pane></mail-merge-pane><address-dialog></address-dialog></main>
  <status-bar></status-bar><task-bar></task-bar><div class="mark">aparat.com/pariyasmart</div>`);
</script>
</body>
</html>
